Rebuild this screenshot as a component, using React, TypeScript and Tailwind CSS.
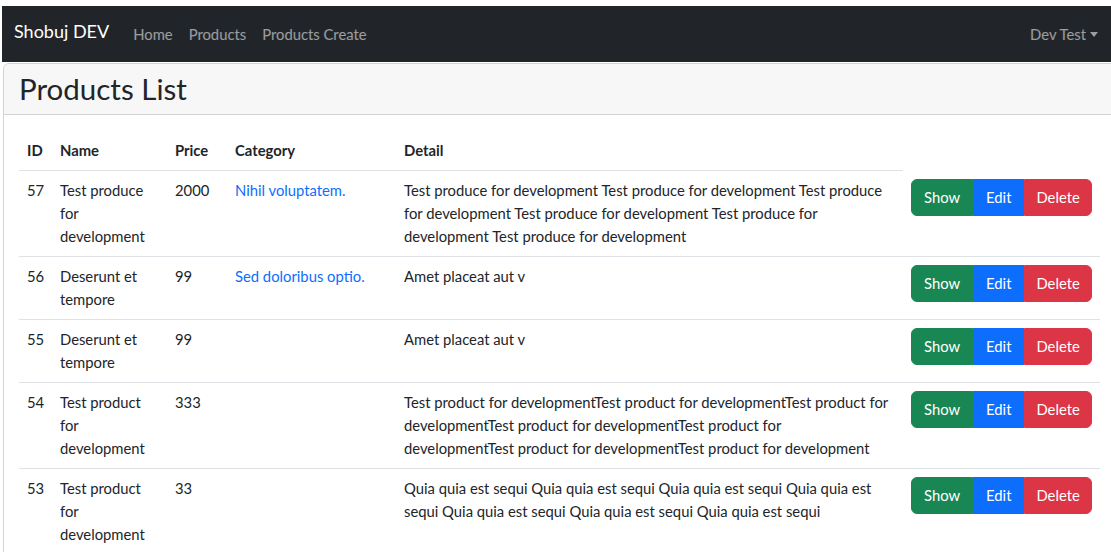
const products = [
  {
    id: 57,
    name: "Test produce for development",
    price: 2000,
    category: "Nihil voluptatem.",
    detail:
      "Test produce for development Test produce for development Test produce for development Test produce for development Test produce for development Test produce for development",
  },
  { id: 56, name: "Deserunt et tempore", price: 99, category: "Sed doloribus optio.", detail: "Amet placeat aut v" },
  { id: 55, name: "Deserunt et tempore", price: 99, category: "", detail: "Amet placeat aut v" },
  {
    id: 54,
    name: "Test product for development",
    price: 333,
    category: "",
    detail:
      "Test product for developmentTest product for developmentTest product for developmentTest product for developmentTest product for developmentTest product for developmentTest product for development",
  },
  {
    id: 53,
    name: "Test product for development",
    price: 33,
    category: "",
    detail:
      "Quia quia est sequi Quia quia est sequi Quia quia est sequi Quia quia est sequi Quia quia est sequi Quia quia est sequi Quia quia est sequi",
  },
]

export default function App() {
  return (
    <div className="w-[1111px] h-[552px] overflow-hidden bg-white text-[#212529]" style={{ fontFamily: "Lato, 'Noto Sans', sans-serif" }}>
      <div className="w-[1116px] ml-[2px] pt-[6px]">
        <nav className="h-[56px] bg-[#212529] flex items-center px-3">
          <a className="text-white text-[18px] mr-4 -mt-[5px]">Shobuj DEV</a>
          <div className="flex text-[14.8px] text-white/55">
            <a className="px-2">Home</a>
            <a className="px-2">Products</a>
            <a className="px-2">Products Create</a>
          </div>
          <a className="ml-auto px-2 text-[14.8px] text-white/55 flex items-center">
            Dev Test
            <span className="ml-[4px] w-0 h-0 border-x-[4.5px] border-x-transparent border-t-[5px] border-t-white/55" />
          </a>
        </nav>

        <div className="mt-[1px] ml-[1px] border border-[#d3d3d3] rounded-[6px]">
          <div className="bg-[#f7f7f7] border-b border-[#d3d3d3] px-4 h-[51px] flex items-center rounded-t-[6px]">
            <h3 className="text-[29.5px] leading-[34px] -ml-[1px]">Products List</h3>
          </div>
          <div className="p-4 -ml-[1px]">
            <table className="w-[1081px] table-fixed text-[14.8px] leading-[23px] text-left">
              <colgroup>
                <col className="w-[33px]" />
                <col className="w-[115px]" />
                <col className="w-[60px]" />
                <col className="w-[169px]" />
                <col className="w-[507px]" />
                <col className="w-[197px]" />
              </colgroup>
              <thead>
                <tr>
                  <th className="p-2 font-bold border-b border-[#dee2e6]">ID</th>
                  <th className="p-2 font-bold border-b border-[#dee2e6]">Name</th>
                  <th className="p-2 font-bold border-b border-[#dee2e6]">Price</th>
                  <th className="p-2 font-bold border-b border-[#dee2e6]">Category</th>
                  <th className="p-2 font-bold border-b border-[#dee2e6]">Detail</th>
                  <th />
                </tr>
              </thead>
              <tbody>
                {products.map((p) => (
                  <tr key={p.id} className="border-b border-[#dee2e6] align-top">
                    <td className="p-2">{p.id}</td>
                    <td className="p-2">{p.name}</td>
                    <td className="p-2">{p.price}</td>
                    <td className="p-2">{p.category && <a className="text-[#0d6efd]">{p.category}</a>}</td>
                    <td className="py-2 pl-2 pr-3">{p.detail}</td>
                    <td className="p-2">
                      <div className="flex text-white">
                        <button className="bg-[#198754] px-3 py-[6px] rounded-l-[6px] border border-[#198754]">Show</button>
                        <button className="bg-[#0d6efd] px-3 py-[6px] border border-[#0d6efd]">Edit</button>
                        <button className="bg-[#dc3545] px-[11px] py-[6px] rounded-r-[6px] border border-[#dc3545]">Delete</button>
                      </div>
                    </td>
                  </tr>
                ))}
              </tbody>
            </table>
          </div>
        </div>
      </div>
    </div>
  )
}
